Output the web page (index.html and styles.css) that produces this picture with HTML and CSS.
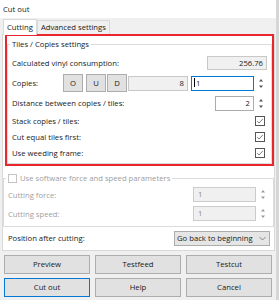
FILE: index.html
```html
<!DOCTYPE html>
<html lang="en">
<head>
  <meta charset="UTF-8" />
  <title>Cut out</title>
  <link rel="stylesheet" href="styles.css">
</head>
<body>
  <div class="window">
    <div class="titlebar">Cut out</div>

    <div class="tabs">
      <div class="tab active">Cutting</div>
      <div class="tab">Advanced settings</div>
    </div>

    <div class="page">
      <div class="highlight">
        <fieldset class="group">
          <legend>Tiles / Copies settings</legend>

          <div class="row">
            <span class="label">Calculated vinyl consumption:</span>
            <span class="field readonly wide">256.76</span>
          </div>

          <div class="row">
            <span class="label">Copies:</span>
            <span class="btn-small">O</span>
            <span class="btn-small gap3">U</span>
            <span class="btn-small">D</span>
            <span class="field readonly copies">8</span>
            <span class="spin">
              <span class="field focus copies-input"><span class="caret"></span>1</span>
              <svg class="arrows" width="10" height="15" viewBox="0 0 10 15"><path d="M3 5.5 L5 3 L7 5.5 Z M3 9.5 L5 12 L7 9.5 Z" fill="#555"/></svg>
            </span>
          </div>

          <div class="row">
            <span class="label">Distance between copies / tiles:</span>
            <span class="spin">
              <span class="field distance">2</span>
              <svg class="arrows" width="10" height="15" viewBox="0 0 10 15"><path d="M3 5.5 L5 3 L7 5.5 Z M3 9.5 L5 12 L7 9.5 Z" fill="#555"/></svg>
            </span>
          </div>

          <div class="row check-row">
            <span class="label">Stack copies / tiles:</span>
            <svg class="check" width="10" height="10" viewBox="0 0 10 10"><rect x="0.5" y="0.5" width="9" height="9" fill="#fff" stroke="#555"/><path d="M2.2 5.2 L4 7 L7.8 3" fill="none" stroke="#444" stroke-width="0.7"/></svg>
          </div>
          <div class="row check-row">
            <span class="label">Cut equal tiles first:</span>
            <svg class="check" width="10" height="10" viewBox="0 0 10 10"><rect x="0.5" y="0.5" width="9" height="9" fill="#fff" stroke="#555"/><path d="M2.2 5.2 L4 7 L7.8 3" fill="none" stroke="#444" stroke-width="0.7"/></svg>
          </div>
          <div class="row check-row">
            <span class="label">Use weeding frame:</span>
            <svg class="check" width="10" height="10" viewBox="0 0 10 10"><rect x="0.5" y="0.5" width="9" height="9" fill="#fff" stroke="#555"/><path d="M2.2 5.2 L4 7 L7.8 3" fill="none" stroke="#444" stroke-width="0.7"/></svg>
          </div>
        </fieldset>
      </div>

      <fieldset class="group disabled">
        <legend>
          <svg class="check" width="9" height="9" viewBox="0 0 9 9"><rect x="0.5" y="0.5" width="8" height="8" fill="#fff" stroke="#c4c4c4"/></svg>
          Use software force and speed parameters
        </legend>

        <div class="row dis-row">
          <span class="label">Cutting force:</span>
          <span class="spin">
            <span class="field off">1</span>
            <svg class="arrows" width="10" height="15" viewBox="0 0 10 15"><path d="M3 5.5 L5 3 L7 5.5 Z M3 9.5 L5 12 L7 9.5 Z" fill="#9a9a9a"/></svg>
          </span>
        </div>
        <div class="row dis-row">
          <span class="label">Cutting speed:</span>
          <span class="spin">
            <span class="field off">1</span>
            <svg class="arrows" width="10" height="15" viewBox="0 0 10 15"><path d="M3 5.5 L5 3 L7 5.5 Z M3 9.5 L5 12 L7 9.5 Z" fill="#9a9a9a"/></svg>
          </span>
        </div>
      </fieldset>

      <div class="row position-row">
        <span class="label">Position after cutting:</span>
        <span class="dropdown">
          Go back to beginning
          <svg width="7" height="5" viewBox="0 0 7 5"><path d="M0.5 1 L3.5 4 L6.5 1" fill="none" stroke="#888"/></svg>
        </span>
      </div>
    </div>

    <div class="buttons">
      <div class="button">Preview</div>
      <div class="button">Testfeed</div>
      <div class="button">Testcut</div>
      <div class="button default">Cut out</div>
      <div class="button">Help</div>
      <div class="button">Cancel</div>
    </div>
  </div>
</body>
</html>
```

FILE: styles.css
```css
body {
  margin: 0;
  font-family: "Open Sans", "Noto Sans", sans-serif;
  font-size: 7.7px;
  color: #1a1a1a;
  background: #fff;
}

.window {
  width: 276px;
  height: 300px;
  background: #f0f0f0;
  border-right: 3px solid #d6d6d6;
}

.titlebar {
  height: 18px;
  line-height: 18px;
  padding-left: 3px;
  background: #fff;
}

/* tab strip */
.tabs {
  display: flex;
  align-items: flex-end;
  height: 16px;
  padding-left: 3px;
}

.tab {
  height: 13px;
  line-height: 13px;
  padding: 0 3px;
  border: 1px solid #d9d9d9;
  border-bottom: none;
  background: #f0f0f0;
}

.tab.active {
  height: 15px;
  line-height: 15px;
  background: #fff;
  margin-bottom: -1px;
  position: relative;
  z-index: 1;
}

.page {
  margin: 0 1px 0 2px;
  height: 215px;
  background: #fff;
  border: 1px solid #d9d9d9;
}

.highlight {
  margin: -1px 0 0 2px;
  border: 2px solid #e8262d;
}

.group {
  margin: 0;
  padding: 1px 4px 2px 4px;
  min-width: 0;
  border: 1px solid #dcdcdc;
}

.group legend {
  margin-left: -2px;
  padding: 0 2px;
  height: 16px;
  line-height: 16px;
}

.row {
  display: flex;
  align-items: center;
  height: 20px;
}

.row .label {
  flex: 1;
}

.check-row {
  height: 16px;
}

.check {
  margin-right: 2px;
}

.field {
  box-sizing: border-box;
  height: 15px;
  line-height: 13px;
  padding: 0 3px;
  border: 1px solid #ababab;
  background: #fff;
  text-align: right;
}

.field.readonly {
  background: #f0f0f0;
  border-color: #c8c8c8;
}

.field.wide {
  width: 60px;
  height: 14px;
  line-height: 12px;
}

.field.copies {
  width: 60px;
  margin-left: 1px;
}

.field.focus {
  width: 63px;
  border-color: #0078d7;
  text-align: left;
  padding-left: 2px;
}

.caret {
  display: inline-block;
  width: 1px;
  height: 9px;
  background: #000;
  vertical-align: -1px;
  margin-right: 1px;
}

.field.distance {
  width: 39px;
}

.field.off {
  width: 63px;
  background: #f0f0f0;
  border-color: #cccccc;
  color: #8a8a8a;
  text-align: left;
  padding-left: 4px;
}

.spin {
  display: inline-flex;
  align-items: center;
  gap: 2px;
  margin-left: 3px;
  margin-right: 1px;
}

.btn-small {
  box-sizing: border-box;
  width: 20px;
  height: 18px;
  line-height: 16px;
  text-align: center;
  background: #e1e1e1;
  border: 1px solid #adadad;
  margin-left: 1px;
}

.btn-small.gap3 {
  margin-left: 3px;
}

/* second group, disabled */
.group.disabled {
  margin-top: 6px;
  padding-bottom: 3px;
  color: #a0a0a0;
}

.group.disabled legend {
  display: flex;
  align-items: center;
  height: 12px;
  line-height: 12px;
  gap: 1px;
}

.dis-row {
  height: 19px;
}

.position-row {
  height: 22px;
  padding: 0 4px 0 5px;
}

.dropdown {
  box-sizing: border-box;
  display: flex;
  align-items: center;
  justify-content: space-between;
  width: 96px;
  height: 15px;
  padding: 0 3px 0 2px;
  background: #e5e5e5;
  border: 1px solid #acacac;
}

/* bottom buttons */
.buttons {
  display: grid;
  grid-template-columns: repeat(3, 86px);
  gap: 4px 5px;
  padding: 4px 0 0 4px;
}

.button {
  box-sizing: border-box;
  height: 19px;
  line-height: 17px;
  text-align: center;
  background: #e1e1e1;
  border: 1px solid #adadad;
}

.button.default {
  border-color: #0078d7;
}
```
